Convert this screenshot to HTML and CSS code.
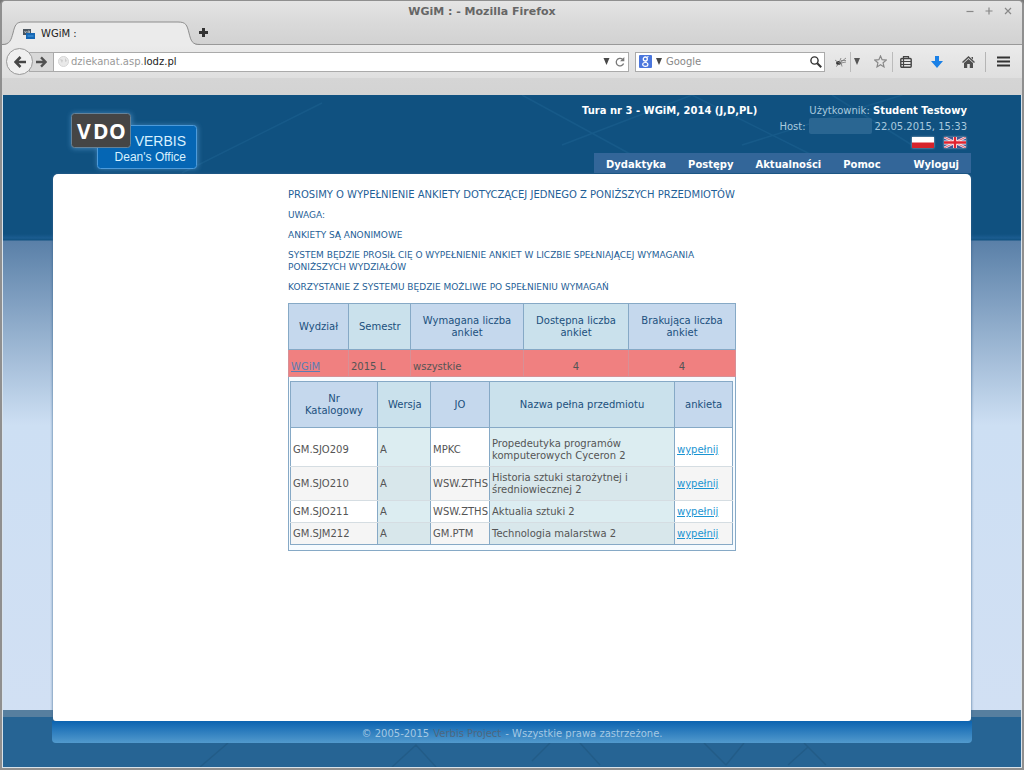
FILE: index.html
```html
<!DOCTYPE html>
<html lang="pl">
<head>
<meta charset="utf-8">
<title>WGiM :</title>
<link rel="stylesheet" href="styles.css">
</head>
<body>
<div class="window">
  <header class="chrome">
    <div class="titlebar">
      <span class="window-title">WGiM : - Mozilla Firefox</span>
      <div class="window-buttons">
        <button type="button" aria-label="Minimalizuj"><svg width="8" height="8" viewBox="0 0 8 8"><path d="M0.5 4.5h7"/></svg></button>
        <button type="button" aria-label="Maksymalizuj"><svg width="8" height="8" viewBox="0 0 8 8"><path d="M0.5 4h7M4 .5v7"/></svg></button>
        <button type="button" aria-label="Zamknij"><svg width="8" height="8" viewBox="0 0 8 8"><path d="M1 1l6 6M7 1l-6 6"/></svg></button>
      </div>
    </div>
    <div class="tabs">
      <div class="tab">
        <svg class="tab-shape" width="198" height="25" viewBox="0 0 198 25"><path d="M0 25V24C8 24 9 19 11 12C13 4 14 1 21 1H176C184 1 185 4 187 12C189 20 190 24 198 24V25Z" fill="#ebebeb"/><path d="M0 23.500C8 23.500 9 19 11 12C13 4 14 1 21 1H176C184 1 185 4 187 12C189 20 190 23.500 198 23.500" fill="none" stroke="#8e8e8e"/></svg>
        <svg class="tab-icon" width="12" height="10" viewBox="0 0 12 10"><path d="M0 0h8v6H0z" fill="#4b5660"/><path d="M1.500 2l1 2 1-2M5 2h1.500v2H5z" stroke="#ccd3d8" stroke-width=".7" fill="none"/><path d="M3 4h9v6H3z" fill="#1667b4"/><path d="M4.500 7h6" stroke="#4aa0e4" /></svg>
        <span class="tab-label">WGiM :</span>
      </div>
      <button type="button" class="new-tab" aria-label="Nowa karta"><svg width="9" height="9" viewBox="0 0 9 9"><path d="M3 0h3v3h3v3H6v3H3V6H0V3h3z" fill="#333"/></svg></button>
    </div>
    <div class="toolbar">
      <button type="button" class="back" aria-label="Wstecz"><svg width="12" height="12" viewBox="0 0 12 12"><path d="M6.500 1L1.500 6l5 5M2 6h10" fill="none" stroke="#474747" stroke-width="2.600"/></svg></button>
      <button type="button" class="forward" aria-label="Dalej"><svg width="11" height="12" viewBox="0 0 12 12"><path d="M5.500 1l5 5-5 5M10 6H0" fill="none" stroke="#505050" stroke-width="2.600"/></svg></button>
      <div class="address">
        <svg width="11" height="11" viewBox="0 0 11 11"><circle cx="5.500" cy="5.500" r="5" fill="#e9e9e9" stroke="#d6d6d6"/><path d="M2 3l3 1-1 3zM7 2l2 3-2 1z" fill="#ccc"/></svg>
        <span class="url">dziekanat.asp.<b>lodz.pl</b></span>
        <button type="button" aria-label="Historia"><svg width="7" height="7" viewBox="0 0 6 7"><path d="M0 0h6L3 7z" fill="#484848"/></svg></button>
        <button type="button" aria-label="Odśwież"><svg width="10" height="10" viewBox="0 0 10 10"><path d="M7.500 2.200A3.800 3.800 0 1 0 8.600 6.500" fill="none" stroke="#777" stroke-width="1.300"/><path d="M9.300 0v4.300H5z" fill="#777"/></svg></button>
      </div>
      <div class="search">
        <svg width="13" height="13" viewBox="0 0 13 13"><rect width="13" height="13" rx="1" fill="#4a76dd"/><circle cx="6.300" cy="4" r="2" fill="none" stroke="#fff" stroke-width="1.300"/><path d="M8 2L9.500 1.600M6.500 6.100L7.500 7.500" stroke="#fff"/><ellipse cx="6.300" cy="9.400" rx="2.600" ry="1.900" fill="none" stroke="#fff" stroke-width="1.200"/></svg>
        <svg width="6" height="7" viewBox="0 0 6 7"><path d="M0 0h6L3 7z" fill="#484848"/></svg>
        <input type="text" placeholder="Google" aria-label="Szukaj w Google">
        <button type="button" aria-label="Szukaj"><svg width="12" height="12" viewBox="0 0 12 12"><circle cx="4.500" cy="4.500" r="3.600" fill="none" stroke="#333" stroke-width="1.400"/><path d="M7.200 7.200l4 4" stroke="#333" stroke-width="2"/></svg></button>
      </div>
      <div class="tools">
        <button type="button" aria-label="Firebug"><svg width="12" height="10" viewBox="0 0 12 10"><ellipse cx="3.500" cy="6" rx="2.500" ry="2" fill="#333"/><path d="M0 3l4 3 2-5M1 9.500l5-4 1 4M6 5l5-4M6 6l5-1M6 3.500h5" fill="none" stroke="#777" stroke-width=".8"/></svg></button>
        <button type="button" class="split" aria-label="Opcje"><svg width="6" height="7" viewBox="0 0 6 7"><path d="M0 0h6L3 7z" fill="#555"/></svg></button>
        <button type="button" class="star" aria-label="Dodaj zakładkę"><svg width="13" height="13" viewBox="0 0 13 13"><path d="M6.500 1l1.600 3.700 4.100.4-3.100 2.700.9 4.100-3.500-2.200L3 11.900l.9-4.100L.8 5.100l4.100-.4z" fill="none" stroke="#888" stroke-width="1.200"/></svg></button>
        <button type="button" class="split list" aria-label="Zakładki"><svg width="12" height="12" viewBox="0 0 12 12"><rect x=".8" y="2.500" width="10.400" height="8.700" rx="1" fill="none" stroke="#444" stroke-width="1.400"/><path d="M3.500 2V.7h5V2M3.500 2.500v9M1 5.500h10M1 8.500h10" fill="none" stroke="#444" stroke-width="1.200"/></svg></button>
        <button type="button" class="down" aria-label="Pobrane"><svg width="12" height="12" viewBox="0 0 12 12"><path d="M4 0h4v5h4l-6 7-6-7h4z" fill="#1a80e6"/></svg></button>
        <button type="button" class="home" aria-label="Strona startowa"><svg width="13" height="12" viewBox="0 0 13 12"><path d="M6.500 0L13 6l-1 1-5.500-5L1 7 0 6zM9.500 1H11v2.500L9.500 2zM2 7l4.500-4L11 7v5H7.800V8H5.200v4H2z" fill="#505050"/></svg></button>
        <button type="button" class="menu" aria-label="Menu"><svg width="13" height="11" viewBox="0 0 13 11"><path d="M0 1.500h13M0 5.500h13M0 9.500h13" stroke="#333" stroke-width="2"/></svg></button>
      </div>
    </div>
  </header>
  <div class="page">
    <svg class="page-lines" viewBox="0 0 1020 145" preserveAspectRatio="xMidYMin slice"><path d="M180 78L320 8M520 0l110 60M560 50L690 0M690 0l120 60M740 50L900 0M830 0l80 50" stroke="#1c608f" stroke-width="1.500" fill="none"/></svg>
    <svg class="page-lines-bottom" viewBox="0 0 1020 24" preserveAspectRatio="xMidYMax slice"><path d="M198 24l28-24M390 24l24-22 20 22M530 18l18-18M578 0l20 22M702 0l22 22M724 22l18-22M802 0l22 22M786 22l20-18" stroke="#205780" stroke-width="1.500" fill="none"/></svg>
    <div class="wrap">
      <div class="site-header">
        <svg class="logo" width="140" height="68" viewBox="0 0 140 68" role="img" aria-label="VDO Verbis Dean's Office">
          <defs><filter id="glow" x="-10%" y="-20%" width="120%" height="140%"><feGaussianBlur stdDeviation="2.500"/></filter></defs>
          <g fill="#5b9dd2" opacity=".6" filter="url(#glow)"><rect x="33" y="18" width="101" height="44" rx="4"/><rect x="7" y="6" width="61" height="36" rx="4"/></g>
          <rect x="33.500" y="18.500" width="99" height="43" rx="3" fill="#0566b4" stroke="#4d9bdb"/>
          <rect x="7.500" y="6.500" width="59" height="34" rx="3" fill="#454545" stroke="#668399"/>
          <text class="logo-vdo" x="13" y="32" fill="#fff">V</text><text class="logo-vdo" x="29" y="32" fill="#fff">D</text><text class="logo-vdo" x="45" y="32" fill="#fff">O</text>
          <text class="logo-name" x="122" y="39" fill="#d8f1ff" text-anchor="end">VERBIS</text>
          <text class="logo-sub" x="122" y="54" fill="#d8f1ff" text-anchor="end">Dean's Office</text>
        </svg>
        <div class="account">
          <div class="info">
            <strong class="term">Tura nr 3 - WGiM, 2014 (J,D,PL)</strong>
            <span>Użytkownik: <strong>Student Testowy</strong></span>
          </div>
          <div class="info host"><span>Host:</span><span class="masked"></span><span>22.05.2015, 15:33</span></div>
          <div class="flags">
            <a href="#" aria-label="Polski"><svg width="22" height="11" viewBox="0 0 22 11"><path d="M0 0h22v6H0z" fill="#fff"/><path d="M0 5.500h22V11H0z" fill="#d6232b"/></svg></a>
            <a href="#" aria-label="English"><svg width="22" height="11" viewBox="0 0 22 11"><path d="M0 0h22v11H0z" fill="#3f5794"/><path d="M0 0l22 11M22 0L0 11" stroke="#f2dfe5" stroke-width="2.500"/><path d="M0 0l22 11M22 0L0 11" stroke="#d43c4c" stroke-width=".8"/><path d="M11 0v11M0 5.500h22" stroke="#fff" stroke-width="4"/><path d="M11 0v11M0 5.500h22" stroke="#e0242f" stroke-width="2.500"/></svg></a>
          </div>
          <nav class="nav"><a href="#">Dydaktyka</a><a href="#">Postępy</a><a href="#">Aktualności</a><a href="#">Pomoc</a><a href="#" class="logout">Wyloguj</a></nav>
        </div>
      </div>
      <main class="content">
        <div class="survey">
          <h1>PROSIMY O WYPEŁNIENIE ANKIETY DOTYCZĄCEJ JEDNEGO Z PONIŻSZYCH PRZEDMIOTÓW</h1>
          <p>UWAGA:</p>
          <p>ANKIETY SĄ ANONIMOWE</p>
          <p>SYSTEM BĘDZIE PROSIŁ CIĘ O WYPEŁNIENIE ANKIET W LICZBIE SPEŁNIAJĄCEJ WYMAGANIA PONIŻSZYCH WYDZIAŁÓW</p>
          <p>KORZYSTANIE Z SYSTEMU BĘDZIE MOŻLIWE PO SPEŁNIENIU WYMAGAŃ</p>
          <table class="grid faculties">
            <colgroup><col class="c-faculty"><col class="c-semester"><col class="c-required"><col class="c-available"><col></colgroup>
            <thead><tr><th>Wydział</th><th>Semestr</th><th>Wymagana liczba ankiet</th><th>Dostępna liczba ankiet</th><th>Brakująca liczba ankiet</th></tr></thead>
            <tbody>
              <tr class="missing"><td><a href="#">WGiM</a></td><td>2015 L</td><td>wszystkie</td><td class="num">4</td><td class="num">4</td></tr>
              <tr><td colspan="5" class="nested">
                <table class="grid courses">
                  <colgroup><col class="c-code"><col class="c-version"><col class="c-unit"><col><col class="c-survey"></colgroup>
                  <thead><tr><th>Nr Katalogowy</th><th>Wersja</th><th>JO</th><th>Nazwa pełna przedmiotu</th><th>ankieta</th></tr></thead>
                  <tbody>
                    <tr><td>GM.SJO209</td><td>A</td><td>MPKC</td><td>Propedeutyka programów komputerowych Cyceron 2</td><td><a href="#">wypełnij</a></td></tr>
                    <tr><td>GM.SJO210</td><td>A</td><td>WSW.ZTHS</td><td>Historia sztuki starożytnej i średniowiecznej 2</td><td><a href="#">wypełnij</a></td></tr>
                    <tr><td>GM.SJO211</td><td>A</td><td>WSW.ZTHS</td><td>Aktualia sztuki 2</td><td><a href="#">wypełnij</a></td></tr>
                    <tr><td>GM.SJM212</td><td>A</td><td>GM.PTM</td><td>Technologia malarstwa 2</td><td><a href="#">wypełnij</a></td></tr>
                  </tbody>
                </table>
              </td></tr>
            </tbody>
          </table>
        </div>
      </main>
      <footer class="site-footer">© 2005-2015 <a href="#">Verbis Project</a> - Wszystkie prawa zastrzeżone.</footer>
    </div>
  </div>
</div>
</body>
</html>
```
FILE: styles.css
```css
* { box-sizing: border-box; }
body { margin: 0; font-family: "DejaVu Sans", sans-serif; font-size: 10px; background: #777; }
button { border: 0; padding: 0; margin: 0; background: none; display: flex; align-items: center; justify-content: center; flex: none; }
svg { display: block; flex: none; }

.window { min-height: 100vh; display: flex; flex-direction: column; padding: 1px 2px 2px; border-radius: 5px 5px 0 0; background: #8f8f8f; }
.chrome { height: 94px; display: flex; flex-direction: column; flex: none; background: linear-gradient(#dedede, #d3d3d3); border-radius: 4px 4px 0 0; }
.titlebar { height: 20px; display: flex; align-items: center; padding: 0 10px; background: linear-gradient(#e4e4e4, #dadada); border-radius: 4px 4px 0 0; }
.window-title { flex: 1; text-align: center; font-size: 11px; font-weight: bold; color: #666; padding-right: 14px; }
.window-buttons { display: flex; gap: 11px; }
.window-buttons path { stroke: #888; stroke-width: 1.2; fill: none; }

.tabs { height: 24px; display: flex; background: linear-gradient(#dadada, #d2d2d2); border-bottom: 1px solid #999; flex: none; }
.tab { position: relative; width: 198px; display: flex; align-items: center; gap: 6px; padding: 1px 0 0 21px; margin-bottom: -1px; }
.tab-shape { position: absolute; left: 0; top: 0; }
.tab-icon, .tab-label { position: relative; }
.tab-label { color: #222; }
.new-tab { width: 9px; margin-left: -1px; }

.toolbar { height: 33px; display: flex; align-items: center; padding: 0 12px 0 4px; background: linear-gradient(#ebebeb, #dfdfdf); }
.back { width: 27px; height: 27px; border: 1px solid #999; border-radius: 50%; background: #f0f0f0; z-index: 1; }
.forward { width: 24px; height: 20px; margin-left: -4px; border: 1px solid #aaa; border-right: 0; background: #d8d8d8; }
.address, .search { height: 20px; background: #fff; border: 1px solid #aaa; display: flex; align-items: center; }
.address { flex: 1; padding: 0 3px 0 4px; gap: 2px; }
.address button { margin-left: 3px; }
.url { flex: 1; color: #999; }
.url b { font-weight: normal; color: #222; }
.search { width: 190px; margin-left: 6px; padding: 0 2px 0 3px; gap: 4px; }
.search input { flex: 1; min-width: 0; border: 0; padding: 0; background: none; font: 10px "DejaVu Sans", sans-serif; color: #222; }
.search input::placeholder { color: #888; opacity: 1; }
.tools { display: flex; align-items: center; padding-left: 10px; }
.split { border-left: 1px solid #bbb; height: 20px; padding-left: 3px; margin-left: 3px; }
.star { margin-left: 14px; }
.list { padding-left: 7px; margin-left: 5px; }
.down, .home { margin-left: 19px; }
.menu { margin-left: 10px; padding-left: 11px; height: 20px; border-left: 1px solid #b5b5b5; }

.page { position: relative; flex: 1; display: flex; justify-content: center; padding: 0 49px 24px; border: 1px solid #d8e2ea; border-top: 0;
  background:
    linear-gradient(#577f9f 0 7px, #266494 7px) bottom / 100% 57px no-repeat,
    linear-gradient(#105180 0 139px, #1b5c90 143px, #105180 145px, #5a80a8 146px, #cddff3 330px, #d2e0f3); }
.page-lines { position: absolute; left: 0; top: 0; width: 100%; height: 145px; opacity: .6; }
.page-lines-bottom { position: absolute; left: 0; bottom: 0; width: 100%; height: 24px; opacity: .6; }
.wrap { position: relative; flex: 1; display: flex; flex-direction: column; }

.site-header { height: 79px; display: flex; justify-content: space-between; padding: 7px 1px 1px 12px; }
.logo { margin-top: 5px; }
.logo-vdo { font: bold 21px "Open Sans", sans-serif; }
.logo-name { font: 14px "Liberation Sans", sans-serif; }
.logo-sub { font: 12px "Liberation Sans", sans-serif; }
.account { width: 377px; display: flex; flex-direction: column; }
.info { height: 16px; display: flex; align-items: center; justify-content: flex-end; padding: 0 4px; color: #a9c9de; white-space: nowrap; }
.info strong { color: #fff; }
.info:first-child { margin-left: -16px; }
.term { margin-right: auto; }
.host { gap: 3px; }
.masked { width: 63px; height: 16px; background: #2a6692; border-radius: 2px; }
.flags { display: flex; align-items: center; justify-content: flex-end; gap: 10px; height: 16px; padding: 0 5px; }
.flags svg { box-shadow: 0 0 2px #a9b9c4; }
.nav { margin-top: auto; height: 20px; padding: 2px 12px 0; display: flex; align-items: center; gap: 22px; background: #336699; font-weight: bold; }
.nav a { color: #fff; text-decoration: none; }
.nav .logout { margin-left: auto; }

.content { flex: 1; background: #fff; border-radius: 5px 5px 3px 3px; margin: 0 1px; box-shadow: 0 0 3px #34618a; }
.survey { width: 448px; margin: 0 auto; padding-top: 14px; color: #1f5f97; }
h1 { margin: 0 0 8px; font-size: 10px; line-height: 13px; font-weight: normal; white-space: nowrap; }
.survey p { margin: 0 0 8px; font-size: 9px; line-height: 12px; }
.survey p:last-of-type { margin-bottom: 10px; }

.grid { width: 100%; table-layout: fixed; border-collapse: collapse; border: 1px solid #8eabc9; font-size: 10px; line-height: 12px; }
.grid th { height: 46px; padding: 0 10px; font-weight: normal; color: #20507d; background: #c5d8ed; border: 1px solid #86a9c6; }
.grid th:nth-child(even) { background: #cae1ec; }
.grid td { padding: 4px 2px; color: #555; border: 1px solid #86a9c6; }
.faculties { background: #f6fbff; }
.missing td { height: 27px; padding: 10px 2px 3px; background: #f08080; border-color: #d79096; }
.missing a { color: #5a7db4; }
.missing td.num { text-align: center; }
.faculties .nested { padding: 4px 2px 5px 1px; }
.c-faculty { width: 60px; }
.c-semester { width: 62px; }
.c-required { width: 113px; }
.c-available { width: 105px; }
.c-code { width: 87px; }
.c-version { width: 53px; }
.c-unit { width: 59px; }
.c-survey { width: 58px; }
.courses td { padding: 5px 2px 4px; background: #fff; border-top-color: #d5dde2; border-bottom-color: #d5dde2; }
.courses tr:nth-child(even) td { background: #f5f5f5; }
.courses td:nth-child(even) { background: #dcedf1; }
.courses tr:nth-child(even) td:nth-child(even) { background: #d8e7eb; }
.courses tbody tr:first-child td { padding-top: 10px; }
.courses tbody tr:last-child td { border-bottom-color: #86a9c6; }
.courses a { color: #1b94d2; }

.site-footer { height: 22px; padding-top: 2px; display: flex; align-items: center; justify-content: center; gap: 4px; border-radius: 0 0 4px 4px; background: linear-gradient(#0b63b0, #529acd); color: #a4c8e3; }
.site-footer a { color: #4d6780; text-decoration: none; }
```
